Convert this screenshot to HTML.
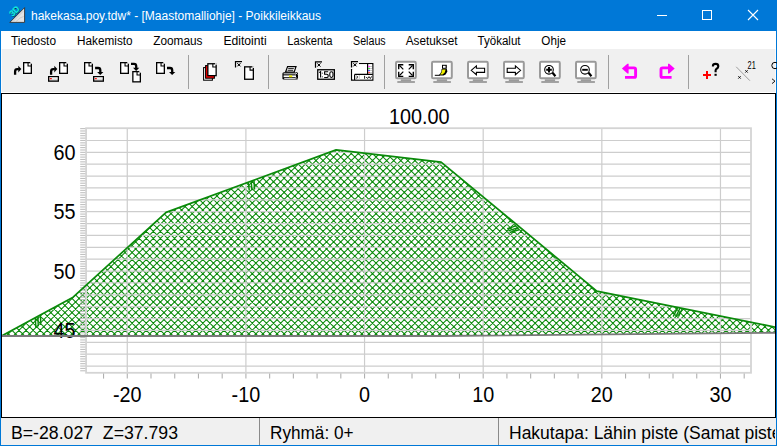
<!DOCTYPE html>
<html><head><meta charset="utf-8"><style>
html,body{margin:0;padding:0;width:777px;height:446px;overflow:hidden;background:#fff}
svg{display:block}
text{font-family:"Liberation Sans",sans-serif}
</style></head><body>
<svg width="777" height="446" viewBox="0 0 777 446">
<defs>
<pattern id="hatch" patternUnits="userSpaceOnUse" width="7.07" height="7.07" x="301.8" y="203.0">
<path d="M-1,-1 L8.07,8.07 M-1,8.07 L8.07,-1 M-1,1 L1,-1 M6.07,8.07 L8.07,6.07 M-1,6.07 L1,8.07 M6.07,-1 L8.07,1" stroke="#0a8a0a" stroke-width="1.05" fill="none"/>
</pattern>
</defs>

<rect x="0" y="0" width="777" height="446" fill="#0078d7"/>
<rect x="1" y="31" width="775" height="18" fill="#ffffff"/>
<rect x="1" y="49" width="775" height="43" fill="#f0f0f0"/>
<rect x="1" y="92" width="775" height="1" fill="#ffffff"/>
<rect x="1" y="49" width="1" height="43" fill="#fafafa"/>
<rect x="775" y="49" width="1" height="43" fill="#fafafa"/>
<rect x="775" y="418" width="1" height="27" fill="#fafafa"/>
<rect x="1" y="93" width="775" height="325" fill="#000000"/>
<rect x="2" y="94" width="773" height="323" fill="#ffffff"/>
<rect x="1" y="418" width="775" height="27" fill="#f0f0f0"/>
<text x="31" y="19.6" font-size="12" fill="#ffffff" textLength="290" lengthAdjust="spacingAndGlyphs">hakekasa.poy.tdw* - [Maastomalliohje] - Poikkileikkaus</text>
<rect x="657" y="15" width="10" height="1" fill="#fff"/>
<rect x="702.5" y="10.5" width="9" height="9" fill="none" stroke="#fff" stroke-width="1"/>
<path d="M748,10 L758,20 M758,10 L748,20" stroke="#fff" stroke-width="1.1"/>
<path d="M9.8,22.4 L24.6,7.6 L24.6,22.4 Z" fill="#e4e4e4" stroke="#303030" stroke-width="0.9"/>
<path d="M13,21.5 L23.5,11 M16,21.6 Q20,17 23.6,16.5" stroke="#b0b0b0" stroke-width="0.5" fill="none"/>
<text x="0" y="0" font-size="8.6" font-weight="bold" fill="#102030" stroke="#102030" stroke-width="0.4" transform="translate(13.2,17.6) rotate(-45)">3D</text>
<text x="0" y="0" font-size="8.6" font-weight="bold" fill="#10e8e8" stroke="#10e8e8" stroke-width="0.3" transform="translate(12.7,17.1) rotate(-45)">3D</text>
<text x="11" y="44.7" font-size="12" fill="#000" textLength="45.0" lengthAdjust="spacingAndGlyphs">Tiedosto</text>
<text x="77" y="44.7" font-size="12" fill="#000" textLength="55.6" lengthAdjust="spacingAndGlyphs">Hakemisto</text>
<text x="153.2" y="44.7" font-size="12" fill="#000" textLength="49.3" lengthAdjust="spacingAndGlyphs">Zoomaus</text>
<text x="223.4" y="44.7" font-size="12" fill="#000" textLength="43.3" lengthAdjust="spacingAndGlyphs">Editointi</text>
<text x="287.2" y="44.7" font-size="12" fill="#000" textLength="45.4" lengthAdjust="spacingAndGlyphs">Laskenta</text>
<text x="353" y="44.7" font-size="12" fill="#000" textLength="32.7" lengthAdjust="spacingAndGlyphs">Selaus</text>
<text x="405.7" y="44.7" font-size="12" fill="#000" textLength="51.8" lengthAdjust="spacingAndGlyphs">Asetukset</text>
<text x="477.5" y="44.7" font-size="12" fill="#000" textLength="43.1" lengthAdjust="spacingAndGlyphs">Työkalut</text>
<text x="541.3" y="44.7" font-size="12" fill="#000" textLength="24.7" lengthAdjust="spacingAndGlyphs">Ohje</text>
<path d="M15.1,74.7 V71.4 Q15.1,69.10000000000001 17.4,69.10000000000001 H18.8" fill="none" stroke="#000" stroke-width="2.3"/><path d="M18.3,65.8 L21.3,69.10000000000001 L18.3,72.4 Z" fill="#000"/>
<rect x="23.65" y="62.65" width="7.7" height="10.7" fill="#fff" stroke="#000" stroke-width="1.3"/><path d="M28.049999999999997,62.65 V65.95 H31.349999999999998" fill="none" stroke="#000" stroke-width="1.1"/><rect x="30.3" y="62" width="1.7" height="1.7" fill="#f4f4f4"/>
<path d="M51.1,74.7 V71.4 Q51.1,69.10000000000001 53.4,69.10000000000001 H54.8" fill="none" stroke="#000" stroke-width="2.3"/><path d="M54.3,65.8 L57.3,69.10000000000001 L54.3,72.4 Z" fill="#000"/>
<rect x="59.65" y="62.65" width="7.7" height="10.7" fill="#fff" stroke="#000" stroke-width="1.3"/><path d="M64.05,62.65 V65.95 H67.35" fill="none" stroke="#000" stroke-width="1.1"/><rect x="66.3" y="62" width="1.7" height="1.7" fill="#f4f4f4"/>
<rect x="48.65" y="76.65" width="9.7" height="4.5" fill="#d8d8d8" stroke="#000" stroke-width="1.3"/><rect x="49.6" y="77.5" width="8" height="1" fill="#fff"/><rect x="49.8" y="78.1" width="2" height="1.1" fill="#f00"/>
<rect x="84.65" y="62.65" width="7.7" height="10.7" fill="#fff" stroke="#000" stroke-width="1.3"/><path d="M89.05000000000001,62.65 V65.95 H92.35000000000001" fill="none" stroke="#000" stroke-width="1.1"/><rect x="91.3" y="62" width="1.7" height="1.7" fill="#f4f4f4"/>
<path d="M95.1,68 H98.1 Q100.3,68 100.3,70.2 V72.3" fill="none" stroke="#000" stroke-width="2.3"/><path d="M97.1,71.9 L103.39999999999999,71.9 L100.25,75.1 Z" fill="#000"/>
<rect x="93.65" y="76.65" width="9.7" height="4.5" fill="#d8d8d8" stroke="#000" stroke-width="1.3"/><rect x="94.6" y="77.5" width="8" height="1" fill="#fff"/><rect x="94.8" y="78.1" width="2" height="1.1" fill="#f00"/>
<rect x="120.65" y="62.65" width="7.7" height="10.7" fill="#fff" stroke="#000" stroke-width="1.3"/><path d="M125.05,62.65 V65.95 H128.35" fill="none" stroke="#000" stroke-width="1.1"/><rect x="127.3" y="62" width="1.7" height="1.7" fill="#f4f4f4"/>
<path d="M131,63.8 H134 Q136.2,63.8 136.2,66.0 V68.1" fill="none" stroke="#000" stroke-width="2.3"/><path d="M133,67.7 L139.3,67.7 L136.15,70.89999999999999 Z" fill="#000"/>
<rect x="132.85" y="71.65" width="7.500000000000001" height="10.2" fill="#fff" stroke="#000" stroke-width="1.3"/><path d="M137.04999999999998,71.65 V74.95 H140.35" fill="none" stroke="#000" stroke-width="1.1"/><rect x="139.3" y="71" width="1.7" height="1.7" fill="#f4f4f4"/>
<rect x="156.65" y="62.65" width="7.7" height="10.7" fill="#fff" stroke="#000" stroke-width="1.3"/><path d="M161.04999999999998,62.65 V65.95 H164.35" fill="none" stroke="#000" stroke-width="1.1"/><rect x="163.3" y="62" width="1.7" height="1.7" fill="#f4f4f4"/>
<path d="M167,68 H170 Q172.2,68 172.2,70.2 V72.3" fill="none" stroke="#000" stroke-width="2.3"/><path d="M169,71.9 L175.3,71.9 L172.15,75.1 Z" fill="#000"/>
<rect x="188" y="55" width="1" height="34" fill="#a0a0a0"/>
<rect x="268" y="55" width="1" height="34" fill="#a0a0a0"/>
<rect x="384" y="55" width="1" height="34" fill="#a0a0a0"/>
<rect x="608" y="55" width="1" height="34" fill="#a0a0a0"/>
<rect x="688" y="55" width="1" height="34" fill="#a0a0a0"/>
<rect x="203.6" y="67.6" width="8.8" height="12.6" fill="#fff" stroke="#000" stroke-width="1.05"/>
<rect x="205.6" y="65.6" width="8.8" height="12.6" fill="#f00" stroke="#000" stroke-width="1.05"/>
<rect x="207.85" y="63.75" width="8.299999999999999" height="11.899999999999999" fill="#fff" stroke="#000" stroke-width="1.3"/><path d="M212.85,63.75 V67.05 H216.15" fill="none" stroke="#000" stroke-width="1.1"/><rect x="215.1" y="63.1" width="1.7" height="1.7" fill="#f4f4f4"/>
<path d="M235.5,67.5 V61.6 H242" fill="none" stroke="#000" stroke-width="1.2"/><path d="M237.3,63.2 L240.5,66.4 M240.5,63.2 L237.3,66.4" stroke="#000" stroke-width="1"/><circle cx="238.9" cy="64.8" r="0.9" fill="#000"/>
<rect x="244.65" y="66.85000000000001" width="8.7" height="12.399999999999999" fill="#fff" stroke="#000" stroke-width="1.3"/><path d="M250.04999999999998,66.85000000000001 V70.15 H253.35" fill="none" stroke="#000" stroke-width="1.1"/><rect x="252.3" y="66.2" width="1.7" height="1.7" fill="#f4f4f4"/>
<path d="M287.6,66.6 H296 L294.2,72 H285.6 Z" fill="#fff" stroke="#000" stroke-width="1.2"/>
<path d="M288.2,68.6 H293.8 M287.6,70.3 H293.2" stroke="#000" stroke-width="0.9"/>
<path d="M284,72.3 H297 Q298,72.3 298,73.5 V78.5 Q298,79.6 297,79.6 H283.6 Q282.4,79.6 282.4,78.5 V73.8 Q282.4,72.3 284,72.3 Z" fill="#000"/>
<rect x="283.6" y="73.4" width="12.4" height="0.9" fill="#fff"/>
<rect x="283.6" y="75.4" width="12.4" height="1.8" fill="#fff"/>
<rect x="289" y="75.4" width="3.2" height="1.8" fill="#ee0"/>
<rect x="284.2" y="78.2" width="11.6" height="0.8" fill="#fff"/>
<path d="M295.5,72.5 L297.5,74.5 M297.5,72.5 L295.5,74.5 M295.5,77 L297.5,79" stroke="#fff" stroke-width="0.6"/>
<path d="M315.5,67.7 V61.800000000000004 H322" fill="none" stroke="#000" stroke-width="1.2"/><path d="M317.3,63.400000000000006 L320.5,66.60000000000001 M320.5,63.400000000000006 L317.3,66.60000000000001" stroke="#000" stroke-width="1"/><circle cx="318.9" cy="65.0" r="0.9" fill="#000"/>
<rect x="317.75" y="69.75" width="16.6" height="9.5" fill="#fff" stroke="#000" stroke-width="1.3"/>
<path d="M319.2,72.6 L320.6,71.6 V77.6 M322.4,72.8 V73.6 M322.4,76.4 V77.2 M328.2,71.8 H324.6 V74.2 H326.8 Q328.2,74.2 328.2,75.6 V76.2 Q328.2,77.5 326.8,77.5 H324.2 M331.4,71.8 Q333,71.8 333,73.6 V75.6 Q333,77.5 331.4,77.5 Q329.8,77.5 329.8,75.6 V73.6 Q329.8,71.8 331.4,71.8 Z" fill="none" stroke="#000" stroke-width="1.1"/>
<path d="M351.6,69 V80 H372.8 V63.6 H359" fill="#fff" stroke="#000" stroke-width="1.3"/>
<rect x="352.3" y="69.5" width="20" height="10" fill="#fff"/>
<rect x="359" y="64.2" width="13.2" height="6" fill="#fff"/>
<path d="M351.5,67.5 V61.6 H358" fill="none" stroke="#000" stroke-width="1.2"/><path d="M353.3,63.2 L356.5,66.4 M356.5,63.2 L353.3,66.4" stroke="#000" stroke-width="1"/><circle cx="354.9" cy="64.8" r="0.9" fill="#000"/>
<path d="M367.6,63.6 V74.6 M354.6,74.4 H372.8 M354.6,74.4 V80" stroke="#000" stroke-width="1.2" fill="none"/>
<rect x="368.4" y="65.9" width="1.3" height="1.3" fill="#f0f"/>
<rect x="370" y="66.1" width="2" height="0.8" fill="#bbb"/>
<rect x="368.4" y="67.9" width="1.3" height="1.3" fill="#0c0"/>
<rect x="370" y="68.1" width="2" height="0.8" fill="#bbb"/>
<rect x="368.4" y="69.9" width="1.3" height="1.3" fill="#00f"/>
<rect x="370" y="70.1" width="2" height="0.8" fill="#bbb"/>
<rect x="368.4" y="71.9" width="1.3" height="1.3" fill="#f00"/>
<rect x="370" y="72.1" width="2" height="0.8" fill="#bbb"/>
<path d="M356.5,76 L357.8,76.8 M356.2,78.2 L357.8,77.6" stroke="#000" stroke-width="0.9"/>
<rect x="358.8" y="75" width="0.9" height="5" fill="#bbb"/>
<path d="M364.6,75.8 V78.8 M366.2,77 L367.6,78.5 L369,76.6 L370.4,78.5 L371.6,76.4" stroke="#000" stroke-width="0.9" fill="none"/>
<rect x="396" y="61.8" width="19.8" height="16.5" rx="1.2" fill="#fff" stroke="#9a9a9a" stroke-width="2"/><rect x="400.8" y="79.3" width="10.3" height="2" fill="#9a9a9a"/><rect x="397.3" y="81.1" width="17.6" height="1.8" fill="#9a9a9a"/><path d="M398.7,69.3 V64.7 H403.3" stroke="#000" stroke-width="1.35" fill="none"/><path d="M399.5,65.5 L403.3,69.3" stroke="#000" stroke-width="1.1"/><path d="M413.3,69.3 V64.7 H408.7" stroke="#000" stroke-width="1.35" fill="none"/><path d="M412.5,65.5 L408.7,69.3" stroke="#000" stroke-width="1.1"/><path d="M398.7,71.7 V76.3 H403.3" stroke="#000" stroke-width="1.35" fill="none"/><path d="M399.5,75.5 L403.3,71.7" stroke="#000" stroke-width="1.1"/><path d="M413.3,71.7 V76.3 H408.7" stroke="#000" stroke-width="1.35" fill="none"/><path d="M412.5,75.5 L408.7,71.7" stroke="#000" stroke-width="1.1"/>
<rect x="432" y="61.8" width="19.8" height="16.5" rx="1.2" fill="#fff" stroke="#9a9a9a" stroke-width="2"/><rect x="436.8" y="79.3" width="10.3" height="2" fill="#9a9a9a"/><rect x="433.3" y="81.1" width="17.6" height="1.8" fill="#9a9a9a"/><rect x="442" y="64.8" width="4.8" height="4" fill="#000"/><rect x="443" y="65.8" width="2.6" height="2" fill="#fff"/><path d="M441.6,69 L446.8,69 L447.4,71.4 L445.6,74.4 L443.6,75.6 L438.6,75.6 L440.4,73.2 L441.4,71.4 Z" fill="#000"/><path d="M442.3,69.6 L445.6,69.6 L444.8,72.6 L442.6,74.6 L440.2,74.6 L441.6,72.6 Z" fill="#ee0"/><rect x="434.8" y="74.8" width="5" height="1" fill="#000"/>
<rect x="468" y="61.8" width="19.8" height="16.5" rx="1.2" fill="#fff" stroke="#9a9a9a" stroke-width="2"/><rect x="472.8" y="79.3" width="10.3" height="2" fill="#9a9a9a"/><rect x="469.3" y="81.1" width="17.6" height="1.8" fill="#9a9a9a"/><path d="M471.2,70.3 L476.4,65.9 V68.2 H484.6 V72.4 H476.4 V74.7 Z" fill="#fff" stroke="#000" stroke-width="1.1"/>
<rect x="504" y="61.8" width="19.8" height="16.5" rx="1.2" fill="#fff" stroke="#9a9a9a" stroke-width="2"/><rect x="508.8" y="79.3" width="10.3" height="2" fill="#9a9a9a"/><rect x="505.3" y="81.1" width="17.6" height="1.8" fill="#9a9a9a"/><path d="M520.6,70.3 L515.4,65.9 V68.2 H507.2 V72.4 H515.4 V74.7 Z" fill="#fff" stroke="#000" stroke-width="1.1"/>
<rect x="540" y="61.8" width="19.8" height="16.5" rx="1.2" fill="#fff" stroke="#9a9a9a" stroke-width="2"/><rect x="544.8" y="79.3" width="10.3" height="2" fill="#9a9a9a"/><rect x="541.3" y="81.1" width="17.6" height="1.8" fill="#9a9a9a"/><path d="M552.6,72.8 L555.4,76.2" stroke="#000" stroke-width="2.2"/><circle cx="549" cy="69.8" r="4.3" fill="#fff" stroke="#000" stroke-width="1.1"/><path d="M546.2,69.8 H551.8 M549,67 V72.6" stroke="#000" stroke-width="1.9"/>
<rect x="576" y="61.8" width="19.8" height="16.5" rx="1.2" fill="#fff" stroke="#9a9a9a" stroke-width="2"/><rect x="580.8" y="79.3" width="10.3" height="2" fill="#9a9a9a"/><rect x="577.3" y="81.1" width="17.6" height="1.8" fill="#9a9a9a"/><path d="M588.6,72.8 L591.4,76.2" stroke="#000" stroke-width="2.2"/><circle cx="585" cy="69.8" r="4.3" fill="#fff" stroke="#000" stroke-width="1.1"/><path d="M582.2,69.8 H587.8" stroke="#000" stroke-width="1.9"/>
<path d="M628,67.9 H634 Q635.6,67.9 635.6,69.5 V76 Q635.6,77.4 634.2,77.4 H625" fill="none" stroke="#f0f" stroke-width="2.9"/>
<path d="M621.9,68.6 L627.4,63.8 H628.6 V73.4 H627.4 Z" fill="#f0f"/>
<path d="M668.6,67.9 H662.6 Q661,67.9 661,69.5 V76 Q661,77.4 662.4,77.4 H671.6" fill="none" stroke="#f0f" stroke-width="2.9"/>
<path d="M674.7,68.6 L669.2,63.8 H668 V73.4 H669.2 Z" fill="#f0f"/>
<path d="M703,75 H711 M707,71 V79" stroke="#f00" stroke-width="2"/>
<path d="M712.9,66.6 V66 Q712.9,63.9 715.6,63.9 Q718.3,63.9 718.3,66.3 Q718.3,67.9 716.7,68.7 Q715.6,69.3 715.6,70.6 V72.2" fill="none" stroke="#000" stroke-width="2.1"/>
<rect x="714.5" y="73.8" width="2.2" height="2" fill="#000"/>
<path d="M736.2,66.8 L749.9,80.7" stroke="#888" stroke-width="0.8"/>
<path d="M738.3,76.2 L740.7,78.6 M740.7,76.2 L738.3,78.6 M745.3,70.2 L747.7,72.6 M747.7,70.2 L745.3,72.6" stroke="#000" stroke-width="0.9"/>
<text x="747.6" y="69" font-size="10" fill="#000" textLength="8.2" lengthAdjust="spacingAndGlyphs">21</text>
<circle cx="775" cy="65.5" r="3.2" fill="none" stroke="#000" stroke-width="1"/>
<path d="M772,78.8 L775,81.2 L772,83.6" fill="none" stroke="#000" stroke-width="0.9"/>
<rect x="259" y="418" width="1" height="27" fill="#8a8a8a"/>
<rect x="498" y="418" width="1" height="27" fill="#8a8a8a"/>
<text x="11" y="438.8" font-size="17.5" fill="#000" textLength="167" lengthAdjust="spacingAndGlyphs" xml:space="preserve">B=-28.027  Z=37.793</text>
<text x="270" y="438.8" font-size="17.5" fill="#000" textLength="83.5" lengthAdjust="spacingAndGlyphs">Ryhmä: 0+</text>
<svg x="499" y="418" width="276" height="27"><text x="10" y="20.8" font-size="17.5" fill="#000">Hakutapa: Lähin piste (Samat pisteet)</text></svg>
<svg x="2" y="94" width="773" height="323" viewBox="2 94 773 323" overflow="hidden">
<clipPath id="pc"><polygon points="-2,337.85 73.1,297.15 166.1,212.35 336.1,149.85 441.1,162.05 596.8,291.05 790,330.15 790,332.6 441,336 -2,336"/></clipPath>
<path clip-path="url(#pc)" d="M-199.54,140L0.46,340M-192.47,140L7.53,340M-185.40,140L14.60,340M-178.33,140L21.67,340M-171.26,140L28.74,340M-164.19,140L35.81,340M-157.12,140L42.88,340M-150.05,140L49.95,340M-142.98,140L57.02,340M-135.91,140L64.09,340M-128.84,140L71.16,340M-121.77,140L78.23,340M-114.70,140L85.30,340M-107.63,140L92.37,340M-100.56,140L99.44,340M-93.49,140L106.51,340M-86.42,140L113.58,340M-79.35,140L120.65,340M-72.28,140L127.72,340M-65.21,140L134.79,340M-58.14,140L141.86,340M-51.07,140L148.93,340M-44.00,140L156.00,340M-36.93,140L163.07,340M-29.86,140L170.14,340M-22.79,140L177.21,340M-15.72,140L184.28,340M-8.65,140L191.35,340M-1.58,140L198.42,340M5.49,140L205.49,340M12.56,140L212.56,340M19.63,140L219.63,340M26.70,140L226.70,340M33.77,140L233.77,340M40.84,140L240.84,340M47.91,140L247.91,340M54.98,140L254.98,340M62.05,140L262.05,340M69.12,140L269.12,340M76.19,140L276.19,340M83.26,140L283.26,340M90.33,140L290.33,340M97.40,140L297.40,340M104.47,140L304.47,340M111.54,140L311.54,340M118.61,140L318.61,340M125.68,140L325.68,340M132.75,140L332.75,340M139.82,140L339.82,340M146.89,140L346.89,340M153.96,140L353.96,340M161.03,140L361.03,340M168.10,140L368.10,340M175.17,140L375.17,340M182.24,140L382.24,340M189.31,140L389.31,340M196.38,140L396.38,340M203.45,140L403.45,340M210.52,140L410.52,340M217.59,140L417.59,340M224.66,140L424.66,340M231.73,140L431.73,340M238.80,140L438.80,340M245.87,140L445.87,340M252.94,140L452.94,340M260.01,140L460.01,340M267.08,140L467.08,340M274.15,140L474.15,340M281.22,140L481.22,340M288.29,140L488.29,340M295.36,140L495.36,340M302.43,140L502.43,340M309.50,140L509.50,340M316.57,140L516.57,340M323.64,140L523.64,340M330.71,140L530.71,340M337.78,140L537.78,340M344.85,140L544.85,340M351.92,140L551.92,340M358.99,140L558.99,340M366.06,140L566.06,340M373.13,140L573.13,340M380.20,140L580.20,340M387.27,140L587.27,340M394.34,140L594.34,340M401.41,140L601.41,340M408.48,140L608.48,340M415.55,140L615.55,340M422.62,140L622.62,340M429.69,140L629.69,340M436.76,140L636.76,340M443.83,140L643.83,340M450.90,140L650.90,340M457.97,140L657.97,340M465.04,140L665.04,340M472.11,140L672.11,340M479.18,140L679.18,340M486.25,140L686.25,340M493.32,140L693.32,340M500.39,140L700.39,340M507.46,140L707.46,340M514.53,140L714.53,340M521.60,140L721.60,340M528.67,140L728.67,340M535.74,140L735.74,340M542.81,140L742.81,340M549.88,140L749.88,340M556.95,140L756.95,340M564.02,140L764.02,340M571.09,140L771.09,340M578.16,140L778.16,340M585.23,140L785.23,340M592.30,140L792.30,340M599.37,140L799.37,340M606.44,140L806.44,340M613.51,140L813.51,340M620.58,140L820.58,340M627.65,140L827.65,340M634.72,140L834.72,340M641.79,140L841.79,340M648.86,140L848.86,340M655.93,140L855.93,340M663.00,140L863.00,340M670.07,140L870.07,340M677.14,140L877.14,340M684.21,140L884.21,340M691.28,140L891.28,340M698.35,140L898.35,340M705.42,140L905.42,340M712.49,140L912.49,340M719.56,140L919.56,340M726.63,140L926.63,340M733.70,140L933.70,340M740.77,140L940.77,340M747.84,140L947.84,340M754.91,140L954.91,340M761.98,140L961.98,340M769.05,140L969.05,340M776.12,140L976.12,340M783.19,140L983.19,340M-2.84,140L-202.84,340M4.23,140L-195.77,340M11.30,140L-188.70,340M18.37,140L-181.63,340M25.44,140L-174.56,340M32.51,140L-167.49,340M39.58,140L-160.42,340M46.65,140L-153.35,340M53.72,140L-146.28,340M60.79,140L-139.21,340M67.86,140L-132.14,340M74.93,140L-125.07,340M82.00,140L-118.00,340M89.07,140L-110.93,340M96.14,140L-103.86,340M103.21,140L-96.79,340M110.28,140L-89.72,340M117.35,140L-82.65,340M124.42,140L-75.58,340M131.49,140L-68.51,340M138.56,140L-61.44,340M145.63,140L-54.37,340M152.70,140L-47.30,340M159.77,140L-40.23,340M166.84,140L-33.16,340M173.91,140L-26.09,340M180.98,140L-19.02,340M188.05,140L-11.95,340M195.12,140L-4.88,340M202.19,140L2.19,340M209.26,140L9.26,340M216.33,140L16.33,340M223.40,140L23.40,340M230.47,140L30.47,340M237.54,140L37.54,340M244.61,140L44.61,340M251.68,140L51.68,340M258.75,140L58.75,340M265.82,140L65.82,340M272.89,140L72.89,340M279.96,140L79.96,340M287.03,140L87.03,340M294.10,140L94.10,340M301.17,140L101.17,340M308.24,140L108.24,340M315.31,140L115.31,340M322.38,140L122.38,340M329.45,140L129.45,340M336.52,140L136.52,340M343.59,140L143.59,340M350.66,140L150.66,340M357.73,140L157.73,340M364.80,140L164.80,340M371.87,140L171.87,340M378.94,140L178.94,340M386.01,140L186.01,340M393.08,140L193.08,340M400.15,140L200.15,340M407.22,140L207.22,340M414.29,140L214.29,340M421.36,140L221.36,340M428.43,140L228.43,340M435.50,140L235.50,340M442.57,140L242.57,340M449.64,140L249.64,340M456.71,140L256.71,340M463.78,140L263.78,340M470.85,140L270.85,340M477.92,140L277.92,340M484.99,140L284.99,340M492.06,140L292.06,340M499.13,140L299.13,340M506.20,140L306.20,340M513.27,140L313.27,340M520.34,140L320.34,340M527.41,140L327.41,340M534.48,140L334.48,340M541.55,140L341.55,340M548.62,140L348.62,340M555.69,140L355.69,340M562.76,140L362.76,340M569.83,140L369.83,340M576.90,140L376.90,340M583.97,140L383.97,340M591.04,140L391.04,340M598.11,140L398.11,340M605.18,140L405.18,340M612.25,140L412.25,340M619.32,140L419.32,340M626.39,140L426.39,340M633.46,140L433.46,340M640.53,140L440.53,340M647.60,140L447.60,340M654.67,140L454.67,340M661.74,140L461.74,340M668.81,140L468.81,340M675.88,140L475.88,340M682.95,140L482.95,340M690.02,140L490.02,340M697.09,140L497.09,340M704.16,140L504.16,340M711.23,140L511.23,340M718.30,140L518.30,340M725.37,140L525.37,340M732.44,140L532.44,340M739.51,140L539.51,340M746.58,140L546.58,340M753.65,140L553.65,340M760.72,140L560.72,340M767.79,140L567.79,340M774.86,140L574.86,340M781.93,140L581.93,340M789.00,140L589.00,340M796.07,140L596.07,340M803.14,140L603.14,340M810.21,140L610.21,340M817.28,140L617.28,340M824.35,140L624.35,340M831.42,140L631.42,340M838.49,140L638.49,340M845.56,140L645.56,340M852.63,140L652.63,340M859.70,140L659.70,340M866.77,140L666.77,340M873.84,140L673.84,340M880.91,140L680.91,340M887.98,140L687.98,340M895.05,140L695.05,340M902.12,140L702.12,340M909.19,140L709.19,340M916.26,140L716.26,340M923.33,140L723.33,340M930.40,140L730.40,340M937.47,140L737.47,340M944.54,140L744.54,340M951.61,140L751.61,340M958.68,140L758.68,340M965.75,140L765.75,340M972.82,140L772.82,340M979.89,140L779.89,340M986.96,140L786.96,340" stroke="#0a8a0a" stroke-width="1.05" fill="none"/>
<path clip-path="url(#pc)" d="M-199.54,140L0.46,340M-192.47,140L7.53,340M-185.40,140L14.60,340M-178.33,140L21.67,340M-171.26,140L28.74,340M-164.19,140L35.81,340M-157.12,140L42.88,340M-150.05,140L49.95,340M-142.98,140L57.02,340M-135.91,140L64.09,340M-128.84,140L71.16,340M-121.77,140L78.23,340M-114.70,140L85.30,340M-107.63,140L92.37,340M-100.56,140L99.44,340M-93.49,140L106.51,340M-86.42,140L113.58,340M-79.35,140L120.65,340M-72.28,140L127.72,340M-65.21,140L134.79,340M-58.14,140L141.86,340M-51.07,140L148.93,340M-44.00,140L156.00,340M-36.93,140L163.07,340M-29.86,140L170.14,340M-22.79,140L177.21,340M-15.72,140L184.28,340M-8.65,140L191.35,340M-1.58,140L198.42,340M5.49,140L205.49,340M12.56,140L212.56,340M19.63,140L219.63,340M26.70,140L226.70,340M33.77,140L233.77,340M40.84,140L240.84,340M47.91,140L247.91,340M54.98,140L254.98,340M62.05,140L262.05,340M69.12,140L269.12,340M76.19,140L276.19,340M83.26,140L283.26,340M90.33,140L290.33,340M97.40,140L297.40,340M104.47,140L304.47,340M111.54,140L311.54,340M118.61,140L318.61,340M125.68,140L325.68,340M132.75,140L332.75,340M139.82,140L339.82,340M146.89,140L346.89,340M153.96,140L353.96,340M161.03,140L361.03,340M168.10,140L368.10,340M175.17,140L375.17,340M182.24,140L382.24,340M189.31,140L389.31,340M196.38,140L396.38,340M203.45,140L403.45,340M210.52,140L410.52,340M217.59,140L417.59,340M224.66,140L424.66,340M231.73,140L431.73,340M238.80,140L438.80,340M245.87,140L445.87,340M252.94,140L452.94,340M260.01,140L460.01,340M267.08,140L467.08,340M274.15,140L474.15,340M281.22,140L481.22,340M288.29,140L488.29,340M295.36,140L495.36,340M302.43,140L502.43,340M309.50,140L509.50,340M316.57,140L516.57,340M323.64,140L523.64,340M330.71,140L530.71,340M337.78,140L537.78,340M344.85,140L544.85,340M351.92,140L551.92,340M358.99,140L558.99,340M366.06,140L566.06,340M373.13,140L573.13,340M380.20,140L580.20,340M387.27,140L587.27,340M394.34,140L594.34,340M401.41,140L601.41,340M408.48,140L608.48,340M415.55,140L615.55,340M422.62,140L622.62,340M429.69,140L629.69,340M436.76,140L636.76,340M443.83,140L643.83,340M450.90,140L650.90,340M457.97,140L657.97,340M465.04,140L665.04,340M472.11,140L672.11,340M479.18,140L679.18,340M486.25,140L686.25,340M493.32,140L693.32,340M500.39,140L700.39,340M507.46,140L707.46,340M514.53,140L714.53,340M521.60,140L721.60,340M528.67,140L728.67,340M535.74,140L735.74,340M542.81,140L742.81,340M549.88,140L749.88,340M556.95,140L756.95,340M564.02,140L764.02,340M571.09,140L771.09,340M578.16,140L778.16,340M585.23,140L785.23,340M592.30,140L792.30,340M599.37,140L799.37,340M606.44,140L806.44,340M613.51,140L813.51,340M620.58,140L820.58,340M627.65,140L827.65,340M634.72,140L834.72,340M641.79,140L841.79,340M648.86,140L848.86,340M655.93,140L855.93,340M663.00,140L863.00,340M670.07,140L870.07,340M677.14,140L877.14,340M684.21,140L884.21,340M691.28,140L891.28,340M698.35,140L898.35,340M705.42,140L905.42,340M712.49,140L912.49,340M719.56,140L919.56,340M726.63,140L926.63,340M733.70,140L933.70,340M740.77,140L940.77,340M747.84,140L947.84,340M754.91,140L954.91,340M761.98,140L961.98,340M769.05,140L969.05,340M776.12,140L976.12,340M783.19,140L983.19,340M-2.84,140L-202.84,340M4.23,140L-195.77,340M11.30,140L-188.70,340M18.37,140L-181.63,340M25.44,140L-174.56,340M32.51,140L-167.49,340M39.58,140L-160.42,340M46.65,140L-153.35,340M53.72,140L-146.28,340M60.79,140L-139.21,340M67.86,140L-132.14,340M74.93,140L-125.07,340M82.00,140L-118.00,340M89.07,140L-110.93,340M96.14,140L-103.86,340M103.21,140L-96.79,340M110.28,140L-89.72,340M117.35,140L-82.65,340M124.42,140L-75.58,340M131.49,140L-68.51,340M138.56,140L-61.44,340M145.63,140L-54.37,340M152.70,140L-47.30,340M159.77,140L-40.23,340M166.84,140L-33.16,340M173.91,140L-26.09,340M180.98,140L-19.02,340M188.05,140L-11.95,340M195.12,140L-4.88,340M202.19,140L2.19,340M209.26,140L9.26,340M216.33,140L16.33,340M223.40,140L23.40,340M230.47,140L30.47,340M237.54,140L37.54,340M244.61,140L44.61,340M251.68,140L51.68,340M258.75,140L58.75,340M265.82,140L65.82,340M272.89,140L72.89,340M279.96,140L79.96,340M287.03,140L87.03,340M294.10,140L94.10,340M301.17,140L101.17,340M308.24,140L108.24,340M315.31,140L115.31,340M322.38,140L122.38,340M329.45,140L129.45,340M336.52,140L136.52,340M343.59,140L143.59,340M350.66,140L150.66,340M357.73,140L157.73,340M364.80,140L164.80,340M371.87,140L171.87,340M378.94,140L178.94,340M386.01,140L186.01,340M393.08,140L193.08,340M400.15,140L200.15,340M407.22,140L207.22,340M414.29,140L214.29,340M421.36,140L221.36,340M428.43,140L228.43,340M435.50,140L235.50,340M442.57,140L242.57,340M449.64,140L249.64,340M456.71,140L256.71,340M463.78,140L263.78,340M470.85,140L270.85,340M477.92,140L277.92,340M484.99,140L284.99,340M492.06,140L292.06,340M499.13,140L299.13,340M506.20,140L306.20,340M513.27,140L313.27,340M520.34,140L320.34,340M527.41,140L327.41,340M534.48,140L334.48,340M541.55,140L341.55,340M548.62,140L348.62,340M555.69,140L355.69,340M562.76,140L362.76,340M569.83,140L369.83,340M576.90,140L376.90,340M583.97,140L383.97,340M591.04,140L391.04,340M598.11,140L398.11,340M605.18,140L405.18,340M612.25,140L412.25,340M619.32,140L419.32,340M626.39,140L426.39,340M633.46,140L433.46,340M640.53,140L440.53,340M647.60,140L447.60,340M654.67,140L454.67,340M661.74,140L461.74,340M668.81,140L468.81,340M675.88,140L475.88,340M682.95,140L482.95,340M690.02,140L490.02,340M697.09,140L497.09,340M704.16,140L504.16,340M711.23,140L511.23,340M718.30,140L518.30,340M725.37,140L525.37,340M732.44,140L532.44,340M739.51,140L539.51,340M746.58,140L546.58,340M753.65,140L553.65,340M760.72,140L560.72,340M767.79,140L567.79,340M774.86,140L574.86,340M781.93,140L581.93,340M789.00,140L589.00,340M796.07,140L596.07,340M803.14,140L603.14,340M810.21,140L610.21,340M817.28,140L617.28,340M824.35,140L624.35,340M831.42,140L631.42,340M838.49,140L638.49,340M845.56,140L645.56,340M852.63,140L652.63,340M859.70,140L659.70,340M866.77,140L666.77,340M873.84,140L673.84,340M880.91,140L680.91,340M887.98,140L687.98,340M895.05,140L695.05,340M902.12,140L702.12,340M909.19,140L709.19,340M916.26,140L716.26,340M923.33,140L723.33,340M930.40,140L730.40,340M937.47,140L737.47,340M944.54,140L744.54,340M951.61,140L751.61,340M958.68,140L758.68,340M965.75,140L765.75,340M972.82,140L772.82,340M979.89,140L779.89,340M986.96,140L786.96,340" stroke="#0a8a0a" stroke-width="1.6" fill="none" stroke-dasharray="1.0 3.9992" stroke-dashoffset="-3.6083"/>
<line x1="86.1" y1="366.05" x2="751.0" y2="366.05" stroke="#cdcdcd" stroke-width="1.2"/>
<line x1="86.1" y1="354.17" x2="751.0" y2="354.17" stroke="#cdcdcd" stroke-width="1.2"/>
<line x1="86.1" y1="342.30" x2="751.0" y2="342.30" stroke="#cdcdcd" stroke-width="1.2"/>
<line x1="86.1" y1="330.43" x2="751.0" y2="330.43" stroke="#cdcdcd" stroke-width="1.2"/>
<line x1="86.1" y1="318.56" x2="751.0" y2="318.56" stroke="#cdcdcd" stroke-width="1.2"/>
<line x1="86.1" y1="306.69" x2="751.0" y2="306.69" stroke="#cdcdcd" stroke-width="1.2"/>
<line x1="86.1" y1="294.81" x2="751.0" y2="294.81" stroke="#cdcdcd" stroke-width="1.2"/>
<line x1="86.1" y1="282.94" x2="751.0" y2="282.94" stroke="#cdcdcd" stroke-width="1.2"/>
<line x1="86.1" y1="271.07" x2="751.0" y2="271.07" stroke="#cdcdcd" stroke-width="1.2"/>
<line x1="86.1" y1="259.20" x2="751.0" y2="259.20" stroke="#cdcdcd" stroke-width="1.2"/>
<line x1="86.1" y1="247.33" x2="751.0" y2="247.33" stroke="#cdcdcd" stroke-width="1.2"/>
<line x1="86.1" y1="235.45" x2="751.0" y2="235.45" stroke="#cdcdcd" stroke-width="1.2"/>
<line x1="86.1" y1="223.58" x2="751.0" y2="223.58" stroke="#cdcdcd" stroke-width="1.2"/>
<line x1="86.1" y1="211.71" x2="751.0" y2="211.71" stroke="#cdcdcd" stroke-width="1.2"/>
<line x1="86.1" y1="199.84" x2="751.0" y2="199.84" stroke="#cdcdcd" stroke-width="1.2"/>
<line x1="86.1" y1="187.97" x2="751.0" y2="187.97" stroke="#cdcdcd" stroke-width="1.2"/>
<line x1="86.1" y1="176.09" x2="751.0" y2="176.09" stroke="#cdcdcd" stroke-width="1.2"/>
<line x1="86.1" y1="164.22" x2="751.0" y2="164.22" stroke="#cdcdcd" stroke-width="1.2"/>
<line x1="86.1" y1="152.35" x2="751.0" y2="152.35" stroke="#cdcdcd" stroke-width="1.2"/>
<line x1="86.1" y1="140.48" x2="751.0" y2="140.48" stroke="#cdcdcd" stroke-width="1.2"/>
<line x1="127.27" y1="128.2" x2="127.27" y2="372.8" stroke="#cdcdcd" stroke-width="1.2"/>
<line x1="245.91" y1="128.2" x2="245.91" y2="372.8" stroke="#cdcdcd" stroke-width="1.2"/>
<line x1="364.55" y1="128.2" x2="364.55" y2="372.8" stroke="#cdcdcd" stroke-width="1.2"/>
<line x1="483.19" y1="128.2" x2="483.19" y2="372.8" stroke="#cdcdcd" stroke-width="1.2"/>
<line x1="601.83" y1="128.2" x2="601.83" y2="372.8" stroke="#cdcdcd" stroke-width="1.2"/>
<line x1="720.47" y1="128.2" x2="720.47" y2="372.8" stroke="#cdcdcd" stroke-width="1.2"/>
<line x1="80.2" y1="128.61" x2="86.1" y2="128.61" stroke="#c0c0c0" stroke-width="1.1"/>
<line x1="80.2" y1="130.98" x2="86.1" y2="130.98" stroke="#c0c0c0" stroke-width="1.1"/>
<line x1="80.2" y1="133.35" x2="86.1" y2="133.35" stroke="#c0c0c0" stroke-width="1.1"/>
<line x1="80.2" y1="135.73" x2="86.1" y2="135.73" stroke="#c0c0c0" stroke-width="1.1"/>
<line x1="80.2" y1="138.10" x2="86.1" y2="138.10" stroke="#c0c0c0" stroke-width="1.1"/>
<line x1="80.2" y1="140.48" x2="86.1" y2="140.48" stroke="#c0c0c0" stroke-width="1.1"/>
<line x1="80.2" y1="142.85" x2="86.1" y2="142.85" stroke="#c0c0c0" stroke-width="1.1"/>
<line x1="80.2" y1="145.23" x2="86.1" y2="145.23" stroke="#c0c0c0" stroke-width="1.1"/>
<line x1="80.2" y1="147.60" x2="86.1" y2="147.60" stroke="#c0c0c0" stroke-width="1.1"/>
<line x1="80.2" y1="149.98" x2="86.1" y2="149.98" stroke="#c0c0c0" stroke-width="1.1"/>
<line x1="80.2" y1="152.35" x2="86.1" y2="152.35" stroke="#c0c0c0" stroke-width="1.1"/>
<line x1="80.2" y1="154.72" x2="86.1" y2="154.72" stroke="#c0c0c0" stroke-width="1.1"/>
<line x1="80.2" y1="157.10" x2="86.1" y2="157.10" stroke="#c0c0c0" stroke-width="1.1"/>
<line x1="80.2" y1="159.47" x2="86.1" y2="159.47" stroke="#c0c0c0" stroke-width="1.1"/>
<line x1="80.2" y1="161.85" x2="86.1" y2="161.85" stroke="#c0c0c0" stroke-width="1.1"/>
<line x1="80.2" y1="164.22" x2="86.1" y2="164.22" stroke="#c0c0c0" stroke-width="1.1"/>
<line x1="80.2" y1="166.60" x2="86.1" y2="166.60" stroke="#c0c0c0" stroke-width="1.1"/>
<line x1="80.2" y1="168.97" x2="86.1" y2="168.97" stroke="#c0c0c0" stroke-width="1.1"/>
<line x1="80.2" y1="171.35" x2="86.1" y2="171.35" stroke="#c0c0c0" stroke-width="1.1"/>
<line x1="80.2" y1="173.72" x2="86.1" y2="173.72" stroke="#c0c0c0" stroke-width="1.1"/>
<line x1="80.2" y1="176.09" x2="86.1" y2="176.09" stroke="#c0c0c0" stroke-width="1.1"/>
<line x1="80.2" y1="178.47" x2="86.1" y2="178.47" stroke="#c0c0c0" stroke-width="1.1"/>
<line x1="80.2" y1="180.84" x2="86.1" y2="180.84" stroke="#c0c0c0" stroke-width="1.1"/>
<line x1="80.2" y1="183.22" x2="86.1" y2="183.22" stroke="#c0c0c0" stroke-width="1.1"/>
<line x1="80.2" y1="185.59" x2="86.1" y2="185.59" stroke="#c0c0c0" stroke-width="1.1"/>
<line x1="80.2" y1="187.97" x2="86.1" y2="187.97" stroke="#c0c0c0" stroke-width="1.1"/>
<line x1="80.2" y1="190.34" x2="86.1" y2="190.34" stroke="#c0c0c0" stroke-width="1.1"/>
<line x1="80.2" y1="192.71" x2="86.1" y2="192.71" stroke="#c0c0c0" stroke-width="1.1"/>
<line x1="80.2" y1="195.09" x2="86.1" y2="195.09" stroke="#c0c0c0" stroke-width="1.1"/>
<line x1="80.2" y1="197.46" x2="86.1" y2="197.46" stroke="#c0c0c0" stroke-width="1.1"/>
<line x1="80.2" y1="199.84" x2="86.1" y2="199.84" stroke="#c0c0c0" stroke-width="1.1"/>
<line x1="80.2" y1="202.21" x2="86.1" y2="202.21" stroke="#c0c0c0" stroke-width="1.1"/>
<line x1="80.2" y1="204.59" x2="86.1" y2="204.59" stroke="#c0c0c0" stroke-width="1.1"/>
<line x1="80.2" y1="206.96" x2="86.1" y2="206.96" stroke="#c0c0c0" stroke-width="1.1"/>
<line x1="80.2" y1="209.34" x2="86.1" y2="209.34" stroke="#c0c0c0" stroke-width="1.1"/>
<line x1="80.2" y1="211.71" x2="86.1" y2="211.71" stroke="#c0c0c0" stroke-width="1.1"/>
<line x1="80.2" y1="214.08" x2="86.1" y2="214.08" stroke="#c0c0c0" stroke-width="1.1"/>
<line x1="80.2" y1="216.46" x2="86.1" y2="216.46" stroke="#c0c0c0" stroke-width="1.1"/>
<line x1="80.2" y1="218.83" x2="86.1" y2="218.83" stroke="#c0c0c0" stroke-width="1.1"/>
<line x1="80.2" y1="221.21" x2="86.1" y2="221.21" stroke="#c0c0c0" stroke-width="1.1"/>
<line x1="80.2" y1="223.58" x2="86.1" y2="223.58" stroke="#c0c0c0" stroke-width="1.1"/>
<line x1="80.2" y1="225.96" x2="86.1" y2="225.96" stroke="#c0c0c0" stroke-width="1.1"/>
<line x1="80.2" y1="228.33" x2="86.1" y2="228.33" stroke="#c0c0c0" stroke-width="1.1"/>
<line x1="80.2" y1="230.71" x2="86.1" y2="230.71" stroke="#c0c0c0" stroke-width="1.1"/>
<line x1="80.2" y1="233.08" x2="86.1" y2="233.08" stroke="#c0c0c0" stroke-width="1.1"/>
<line x1="80.2" y1="235.45" x2="86.1" y2="235.45" stroke="#c0c0c0" stroke-width="1.1"/>
<line x1="80.2" y1="237.83" x2="86.1" y2="237.83" stroke="#c0c0c0" stroke-width="1.1"/>
<line x1="80.2" y1="240.20" x2="86.1" y2="240.20" stroke="#c0c0c0" stroke-width="1.1"/>
<line x1="80.2" y1="242.58" x2="86.1" y2="242.58" stroke="#c0c0c0" stroke-width="1.1"/>
<line x1="80.2" y1="244.95" x2="86.1" y2="244.95" stroke="#c0c0c0" stroke-width="1.1"/>
<line x1="80.2" y1="247.33" x2="86.1" y2="247.33" stroke="#c0c0c0" stroke-width="1.1"/>
<line x1="80.2" y1="249.70" x2="86.1" y2="249.70" stroke="#c0c0c0" stroke-width="1.1"/>
<line x1="80.2" y1="252.07" x2="86.1" y2="252.07" stroke="#c0c0c0" stroke-width="1.1"/>
<line x1="80.2" y1="254.45" x2="86.1" y2="254.45" stroke="#c0c0c0" stroke-width="1.1"/>
<line x1="80.2" y1="256.82" x2="86.1" y2="256.82" stroke="#c0c0c0" stroke-width="1.1"/>
<line x1="80.2" y1="259.20" x2="86.1" y2="259.20" stroke="#c0c0c0" stroke-width="1.1"/>
<line x1="80.2" y1="261.57" x2="86.1" y2="261.57" stroke="#c0c0c0" stroke-width="1.1"/>
<line x1="80.2" y1="263.95" x2="86.1" y2="263.95" stroke="#c0c0c0" stroke-width="1.1"/>
<line x1="80.2" y1="266.32" x2="86.1" y2="266.32" stroke="#c0c0c0" stroke-width="1.1"/>
<line x1="80.2" y1="268.70" x2="86.1" y2="268.70" stroke="#c0c0c0" stroke-width="1.1"/>
<line x1="80.2" y1="271.07" x2="86.1" y2="271.07" stroke="#c0c0c0" stroke-width="1.1"/>
<line x1="80.2" y1="273.44" x2="86.1" y2="273.44" stroke="#c0c0c0" stroke-width="1.1"/>
<line x1="80.2" y1="275.82" x2="86.1" y2="275.82" stroke="#c0c0c0" stroke-width="1.1"/>
<line x1="80.2" y1="278.19" x2="86.1" y2="278.19" stroke="#c0c0c0" stroke-width="1.1"/>
<line x1="80.2" y1="280.57" x2="86.1" y2="280.57" stroke="#c0c0c0" stroke-width="1.1"/>
<line x1="80.2" y1="282.94" x2="86.1" y2="282.94" stroke="#c0c0c0" stroke-width="1.1"/>
<line x1="80.2" y1="285.32" x2="86.1" y2="285.32" stroke="#c0c0c0" stroke-width="1.1"/>
<line x1="80.2" y1="287.69" x2="86.1" y2="287.69" stroke="#c0c0c0" stroke-width="1.1"/>
<line x1="80.2" y1="290.07" x2="86.1" y2="290.07" stroke="#c0c0c0" stroke-width="1.1"/>
<line x1="80.2" y1="292.44" x2="86.1" y2="292.44" stroke="#c0c0c0" stroke-width="1.1"/>
<line x1="80.2" y1="294.81" x2="86.1" y2="294.81" stroke="#c0c0c0" stroke-width="1.1"/>
<line x1="80.2" y1="297.19" x2="86.1" y2="297.19" stroke="#c0c0c0" stroke-width="1.1"/>
<line x1="80.2" y1="299.56" x2="86.1" y2="299.56" stroke="#c0c0c0" stroke-width="1.1"/>
<line x1="80.2" y1="301.94" x2="86.1" y2="301.94" stroke="#c0c0c0" stroke-width="1.1"/>
<line x1="80.2" y1="304.31" x2="86.1" y2="304.31" stroke="#c0c0c0" stroke-width="1.1"/>
<line x1="80.2" y1="306.69" x2="86.1" y2="306.69" stroke="#c0c0c0" stroke-width="1.1"/>
<line x1="80.2" y1="309.06" x2="86.1" y2="309.06" stroke="#c0c0c0" stroke-width="1.1"/>
<line x1="80.2" y1="311.43" x2="86.1" y2="311.43" stroke="#c0c0c0" stroke-width="1.1"/>
<line x1="80.2" y1="313.81" x2="86.1" y2="313.81" stroke="#c0c0c0" stroke-width="1.1"/>
<line x1="80.2" y1="316.18" x2="86.1" y2="316.18" stroke="#c0c0c0" stroke-width="1.1"/>
<line x1="80.2" y1="318.56" x2="86.1" y2="318.56" stroke="#c0c0c0" stroke-width="1.1"/>
<line x1="80.2" y1="320.93" x2="86.1" y2="320.93" stroke="#c0c0c0" stroke-width="1.1"/>
<line x1="80.2" y1="323.31" x2="86.1" y2="323.31" stroke="#c0c0c0" stroke-width="1.1"/>
<line x1="80.2" y1="325.68" x2="86.1" y2="325.68" stroke="#c0c0c0" stroke-width="1.1"/>
<line x1="80.2" y1="328.06" x2="86.1" y2="328.06" stroke="#c0c0c0" stroke-width="1.1"/>
<line x1="80.2" y1="330.43" x2="86.1" y2="330.43" stroke="#c0c0c0" stroke-width="1.1"/>
<line x1="80.2" y1="332.80" x2="86.1" y2="332.80" stroke="#c0c0c0" stroke-width="1.1"/>
<line x1="80.2" y1="335.18" x2="86.1" y2="335.18" stroke="#c0c0c0" stroke-width="1.1"/>
<line x1="80.2" y1="337.55" x2="86.1" y2="337.55" stroke="#c0c0c0" stroke-width="1.1"/>
<line x1="80.2" y1="339.93" x2="86.1" y2="339.93" stroke="#c0c0c0" stroke-width="1.1"/>
<line x1="80.2" y1="342.30" x2="86.1" y2="342.30" stroke="#c0c0c0" stroke-width="1.1"/>
<line x1="80.2" y1="344.68" x2="86.1" y2="344.68" stroke="#c0c0c0" stroke-width="1.1"/>
<line x1="80.2" y1="347.05" x2="86.1" y2="347.05" stroke="#c0c0c0" stroke-width="1.1"/>
<line x1="80.2" y1="349.43" x2="86.1" y2="349.43" stroke="#c0c0c0" stroke-width="1.1"/>
<line x1="80.2" y1="351.80" x2="86.1" y2="351.80" stroke="#c0c0c0" stroke-width="1.1"/>
<line x1="80.2" y1="354.17" x2="86.1" y2="354.17" stroke="#c0c0c0" stroke-width="1.1"/>
<line x1="80.2" y1="356.55" x2="86.1" y2="356.55" stroke="#c0c0c0" stroke-width="1.1"/>
<line x1="80.2" y1="358.92" x2="86.1" y2="358.92" stroke="#c0c0c0" stroke-width="1.1"/>
<line x1="80.2" y1="361.30" x2="86.1" y2="361.30" stroke="#c0c0c0" stroke-width="1.1"/>
<line x1="80.2" y1="363.67" x2="86.1" y2="363.67" stroke="#c0c0c0" stroke-width="1.1"/>
<line x1="80.2" y1="366.05" x2="86.1" y2="366.05" stroke="#c0c0c0" stroke-width="1.1"/>
<line x1="80.2" y1="368.42" x2="86.1" y2="368.42" stroke="#c0c0c0" stroke-width="1.1"/>
<line x1="80.2" y1="370.79" x2="86.1" y2="370.79" stroke="#c0c0c0" stroke-width="1.1"/>
<line x1="103.54" y1="372.8" x2="103.54" y2="378.6" stroke="#b0b0b0" stroke-width="1.1"/>
<line x1="127.27" y1="372.8" x2="127.27" y2="378.6" stroke="#b0b0b0" stroke-width="1.1"/>
<line x1="151.00" y1="372.8" x2="151.00" y2="378.6" stroke="#b0b0b0" stroke-width="1.1"/>
<line x1="174.73" y1="372.8" x2="174.73" y2="378.6" stroke="#b0b0b0" stroke-width="1.1"/>
<line x1="198.45" y1="372.8" x2="198.45" y2="378.6" stroke="#b0b0b0" stroke-width="1.1"/>
<line x1="222.18" y1="372.8" x2="222.18" y2="378.6" stroke="#b0b0b0" stroke-width="1.1"/>
<line x1="245.91" y1="372.8" x2="245.91" y2="378.6" stroke="#b0b0b0" stroke-width="1.1"/>
<line x1="269.64" y1="372.8" x2="269.64" y2="378.6" stroke="#b0b0b0" stroke-width="1.1"/>
<line x1="293.37" y1="372.8" x2="293.37" y2="378.6" stroke="#b0b0b0" stroke-width="1.1"/>
<line x1="317.09" y1="372.8" x2="317.09" y2="378.6" stroke="#b0b0b0" stroke-width="1.1"/>
<line x1="340.82" y1="372.8" x2="340.82" y2="378.6" stroke="#b0b0b0" stroke-width="1.1"/>
<line x1="364.55" y1="372.8" x2="364.55" y2="378.6" stroke="#b0b0b0" stroke-width="1.1"/>
<line x1="388.28" y1="372.8" x2="388.28" y2="378.6" stroke="#b0b0b0" stroke-width="1.1"/>
<line x1="412.01" y1="372.8" x2="412.01" y2="378.6" stroke="#b0b0b0" stroke-width="1.1"/>
<line x1="435.73" y1="372.8" x2="435.73" y2="378.6" stroke="#b0b0b0" stroke-width="1.1"/>
<line x1="459.46" y1="372.8" x2="459.46" y2="378.6" stroke="#b0b0b0" stroke-width="1.1"/>
<line x1="483.19" y1="372.8" x2="483.19" y2="378.6" stroke="#b0b0b0" stroke-width="1.1"/>
<line x1="506.92" y1="372.8" x2="506.92" y2="378.6" stroke="#b0b0b0" stroke-width="1.1"/>
<line x1="530.65" y1="372.8" x2="530.65" y2="378.6" stroke="#b0b0b0" stroke-width="1.1"/>
<line x1="554.37" y1="372.8" x2="554.37" y2="378.6" stroke="#b0b0b0" stroke-width="1.1"/>
<line x1="578.10" y1="372.8" x2="578.10" y2="378.6" stroke="#b0b0b0" stroke-width="1.1"/>
<line x1="601.83" y1="372.8" x2="601.83" y2="378.6" stroke="#b0b0b0" stroke-width="1.1"/>
<line x1="625.56" y1="372.8" x2="625.56" y2="378.6" stroke="#b0b0b0" stroke-width="1.1"/>
<line x1="649.29" y1="372.8" x2="649.29" y2="378.6" stroke="#b0b0b0" stroke-width="1.1"/>
<line x1="673.01" y1="372.8" x2="673.01" y2="378.6" stroke="#b0b0b0" stroke-width="1.1"/>
<line x1="696.74" y1="372.8" x2="696.74" y2="378.6" stroke="#b0b0b0" stroke-width="1.1"/>
<line x1="720.47" y1="372.8" x2="720.47" y2="378.6" stroke="#b0b0b0" stroke-width="1.1"/>
<line x1="744.20" y1="372.8" x2="744.20" y2="378.6" stroke="#b0b0b0" stroke-width="1.1"/>
<rect x="86.1" y="128.2" width="664.9" height="244.6" fill="none" stroke="#d4d4d4" stroke-width="1.8"/>
<polyline points="-2,337.85 73.1,297.15 166.1,212.35 336.1,149.85 441.1,162.05 596.8,291.05 790,330.15" fill="none" stroke="#0a8a0a" stroke-width="1.7" stroke-linejoin="round"/>
<path d="M35.3,318.4 L35.9,327.6 M37.9,317 L38.3,326.4 M40.5,315.8 L40.8,325" stroke="#0a8a0a" stroke-width="1.45" fill="none"/>
<path d="M248.3,182.6 L249.3,190.6 M251.2,181.6 L252,190.4 M254,180.6 L254.5,189.6" stroke="#0a8a0a" stroke-width="1.45" fill="none"/>
<path d="M516,225.9 L507.2,228.7 M517.6,227.9 L508.4,230.7 M519,229.7 L509.6,232.5" stroke="#0a8a0a" stroke-width="1.45" fill="none"/>
<path d="M677.6,307.6 L673.2,316.6 M680,308.2 L675.8,316.8 M682.3,308.8 L678.4,316.6" stroke="#0a8a0a" stroke-width="1.45" fill="none"/>
<text transform="translate(75.5,159.85) scale(0.88,1)" font-size="22.5" text-anchor="end" fill="#000">60</text>
<text transform="translate(75.5,219.21) scale(0.88,1)" font-size="22.5" text-anchor="end" fill="#000">55</text>
<text transform="translate(75.5,278.57) scale(0.88,1)" font-size="22.5" text-anchor="end" fill="#000">50</text>
<text transform="translate(75.5,337.93) scale(0.88,1)" font-size="22.5" text-anchor="end" fill="#000">45</text>
<text transform="translate(127.27,401.8) scale(0.88,1)" font-size="22.5" text-anchor="middle" fill="#000">-20</text>
<text transform="translate(245.91,401.8) scale(0.88,1)" font-size="22.5" text-anchor="middle" fill="#000">-10</text>
<text transform="translate(364.55,401.8) scale(0.88,1)" font-size="22.5" text-anchor="middle" fill="#000">0</text>
<text transform="translate(483.19,401.8) scale(0.88,1)" font-size="22.5" text-anchor="middle" fill="#000">10</text>
<text transform="translate(601.83,401.8) scale(0.88,1)" font-size="22.5" text-anchor="middle" fill="#000">20</text>
<text transform="translate(720.47,401.8) scale(0.88,1)" font-size="22.5" text-anchor="middle" fill="#000">30</text>
<text transform="translate(419.3,123.8) scale(0.88,1)" font-size="22.5" text-anchor="middle" fill="#000">100.00</text>
<polyline points="790,332.6 441,336 -2,336" fill="none" stroke="#7a7a7a" stroke-width="1.8"/>
</svg>
</svg></body></html>
